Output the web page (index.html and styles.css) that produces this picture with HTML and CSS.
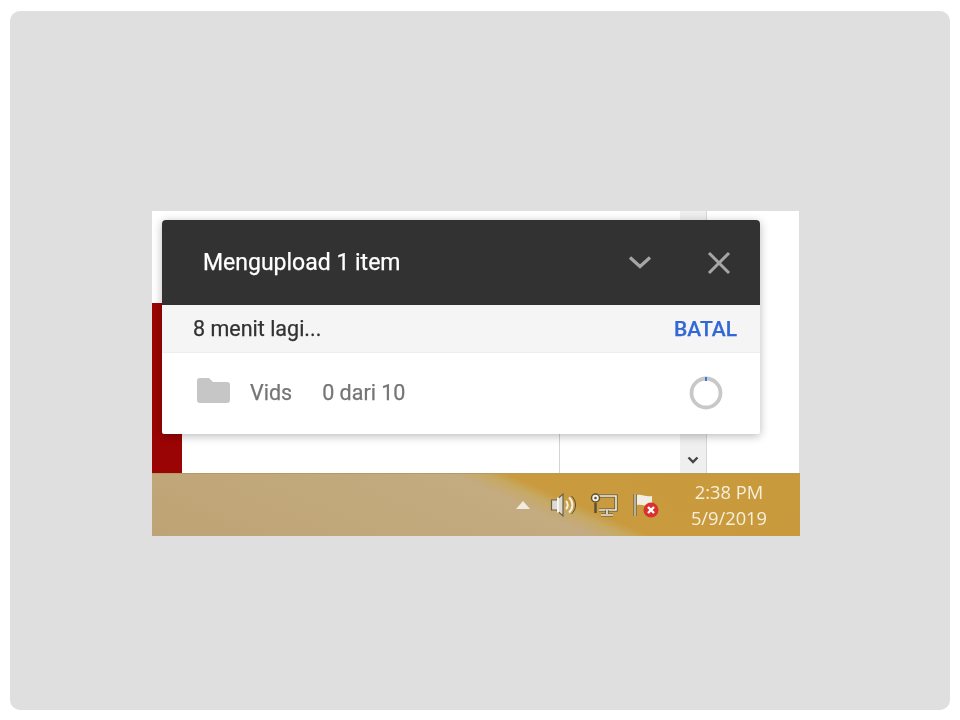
FILE: index.html
```html
<!DOCTYPE html>
<html lang="id">
<head>
<meta charset="utf-8">
<title>Mengupload 1 item</title>
<link rel="stylesheet" href="styles.css">
</head>
<body>
<main class="slide">
  <section class="screen">
    <div class="desktop">
      <div class="red-bar"></div>
      <div class="divider"></div>
      <div class="scrollbar">
        <svg class="scroll-arrow" width="12" height="8" viewBox="0 0 12 8"><path d="M1.500 1.500 6 6l4.500-4.500" fill="none" stroke="#444" stroke-width="2.400"/></svg>
      </div>
      <div class="panel">
        <header class="panel-head">
          <span class="panel-title">Mengupload 1 item</span>
          <div class="panel-actions">
            <svg class="chevron" width="24" height="14" viewBox="0 0 24 14"><path d="M2 2.500 12 11.500 22 2.500" fill="none" stroke="#a6a6a6" stroke-width="3.200"/></svg>
            <svg width="24" height="24" viewBox="0 0 24 24"><path d="M2 2 22 22M22 2 2 22" fill="none" stroke="#a6a6a6" stroke-width="3"/></svg>
          </div>
        </header>
        <div class="status-row">
          <span class="status-text">8 menit lagi...</span>
          <span class="cancel">BATAL</span>
        </div>
        <div class="file-row">
          <svg class="folder" width="33" height="25" viewBox="0 0 33 25"><path d="M3 0h9l4 4h14a3 3 0 0 1 3 3v15a3 3 0 0 1-3 3H3a3 3 0 0 1-3-3V3a3 3 0 0 1 3-3z" fill="#c6c6c6"/></svg>
          <span class="file-name">Vids</span>
          <span class="file-count">0 dari 10</span>
          <svg class="spinner" width="34" height="34" viewBox="0 0 34 34"><circle cx="17" cy="17" r="14.500" fill="none" stroke="#c8c8c8" stroke-width="3.800"/><path d="M17 1v4" stroke="#3b78e7" stroke-width="2"/></svg>
        </div>
      </div>
    </div>
    <footer class="taskbar">
      <div class="tray">
        <svg class="tray-arrow" width="16" height="10" viewBox="0 0 16 10"><path d="M8 1 15 9H1z" fill="#f1ecdf"/></svg>
        <svg class="tray-speaker" width="26" height="26" viewBox="0 0 26 26"><path d="M1.500 8h5l6.500-6v22l-6.500-6h-5z" fill="#dcdad2" stroke="#6a6048" stroke-width="1.200"/><path d="M8 5.500v15" stroke="#f6f4ec" stroke-width="2"/><path d="M16 9a5.500 5.500 0 0 1 0 8M19 5.500a10 10 0 0 1 0 15" fill="none" stroke="#f6f1e2" stroke-width="2"/><path d="M21.500 4a12 12 0 0 1 0 18" fill="none" stroke="#5a5037" stroke-width="1"/></svg>
        <svg class="tray-network" width="28" height="26" viewBox="0 0 28 26"><path d="M9 4h17v14H9" fill="none" stroke="#5a5037" stroke-width="3.200"/><path d="M9 4h17v14H9" fill="none" stroke="#f6f1e2" stroke-width="1.600"/><path d="M17 18v4M11 23h12" stroke="#5a5037" stroke-width="3.200"/><path d="M17 18v4M11 23h12" stroke="#f6f1e2" stroke-width="1.600"/><path d="M5.500 11v10" stroke="#5a5037" stroke-width="2.500"/><circle cx="5.500" cy="6" r="4" fill="#f6f1e2" stroke="#5a5037" stroke-width="1.500"/><circle cx="5.500" cy="6" r="1.300" fill="#5a5037"/></svg>
        <svg class="tray-flag" width="28" height="26" viewBox="0 0 28 26"><path d="M3 2v22" stroke="#5a5037" stroke-width="3"/><path d="M3 2v22" stroke="#f6f1e2" stroke-width="1.200"/><path d="M5 3c5-1 8 2 15 1v10c-6 1-9-2-15-1z" fill="#f1eee3"/><circle cx="19" cy="18" r="7.500" fill="#d9312f"/><path d="M16 15l6 6M22 15l-6 6" stroke="#fff" stroke-width="2.400"/></svg>
      </div>
      <div class="clock">
        <span>2:38 PM</span>
        <span>5/9/2019</span>
      </div>
    </footer>
  </section>
</main>
</body>
</html>
```
FILE: styles.css
```css
* { box-sizing: border-box; }
html, body { margin: 0; background: #fff; }
body { height: 720px; overflow: hidden; padding: 11px 10px 10px; }
.slide {
  height: 699px;
  background: #dfdfdf;
  border-radius: 10px;
  padding: 200px 150px 0 142px;
}
.screen {
  width: 648px;
  height: 325px;
  display: flex;
  flex-direction: column;
  filter: blur(0.4px);
}
.desktop {
  position: relative;
  height: 262px;
  background: #fff;
  margin-right: 1px;
}
.red-bar {
  position: absolute;
  left: 0;
  bottom: 0;
  width: 30px;
  height: 170px;
  background: #9b0404;
}
.divider {
  position: absolute;
  left: 407px;
  bottom: 0;
  width: 1px;
  height: 60px;
  background: #d4d4d4;
}
.scrollbar {
  position: absolute;
  left: 528px;
  top: 0;
  width: 27px;
  height: 262px;
  background: #efefef;
  border-right: 1px solid #d6d6d6;
  display: flex;
  align-items: flex-end;
  justify-content: center;
  padding-bottom: 9px;
}
.panel {
  position: absolute;
  left: 10px;
  top: 9px;
  width: 598px;
  height: 214px;
  border-radius: 4px 4px 2px 2px;
  overflow: hidden;
  background: #fff;
  box-shadow: 0 2px 10px rgba(0, 0, 0, 0.28);
  display: flex;
  flex-direction: column;
  font-family: Roboto, "Liberation Sans", sans-serif;
  -webkit-text-stroke: 0.25px currentColor;
}
.panel-head {
  height: 85px;
  background: #323232;
  display: flex;
  align-items: center;
  justify-content: space-between;
  padding: 0 29px 0 41px;
}
.panel-title { color: #fff; font-size: 23px; }
.panel-actions { display: flex; align-items: center; gap: 55px; }
.chevron { margin-bottom: 2px; }
.status-row {
  height: 48px;
  background: #f5f5f5;
  display: flex;
  align-items: center;
  justify-content: space-between;
  padding: 0 23px 0 31px;
  border-bottom: 1px solid #eee;
}
.status-text { color: #333; font-size: 21.500px; }
.cancel { color: #3367d6; font-size: 21px; font-weight: 500; }
.file-row {
  flex: 1;
  display: flex;
  align-items: center;
  padding: 0 37px 2px 35px;
  color: #757575;
  font-size: 21.500px;
}
.folder { margin: 0 20px 5px 0; }
.file-name { margin-right: 30px; }
.spinner { margin-left: auto; }
.taskbar {
  height: 63px;
  border-top: 1px solid #b49a63;
  background: linear-gradient(23.500deg, #bea474 0, #c4ab80 56%, #c7a964 60%, #c99b3e 63%, #c89a3c 100%);
  display: flex;
  align-items: center;
  justify-content: flex-end;
  padding-right: 33px;
  font-family: "Open Sans", "Noto Sans", sans-serif;
  color: #f6efdc;
}
.tray { display: flex; align-items: center; margin-right: 31px; }
.tray-arrow { margin-right: 19px; }
.tray-speaker { margin-right: 14px; }
.tray-network { margin-right: 14px; }
.clock {
  display: flex;
  flex-direction: column;
  align-items: center;
  font-size: 18.300px;
  line-height: 26px;
}
```
